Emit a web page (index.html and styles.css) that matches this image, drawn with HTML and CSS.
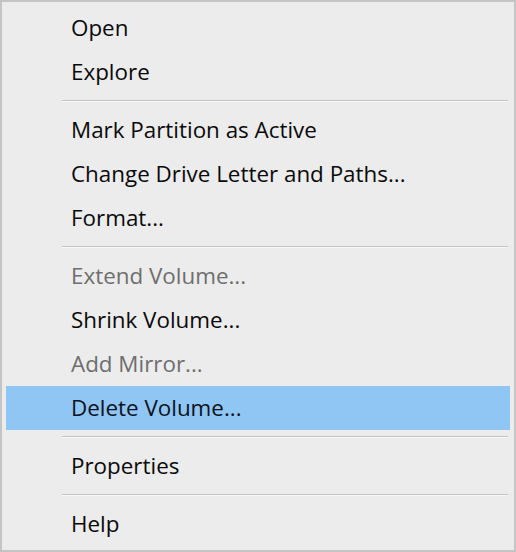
FILE: index.html
```html
<!DOCTYPE html>
<html>
<head>
<meta charset="utf-8">
<link rel="stylesheet" href="styles.css">
</head>
<body>
<div class="menu">
  <div class="item">Open</div>
  <div class="item">Explore</div>
  <div class="sep"></div>
  <div class="item">Mark Partition as Active</div>
  <div class="item">Change Drive Letter and Paths...</div>
  <div class="item">Format...</div>
  <div class="sep"></div>
  <div class="item disabled">Extend Volume...</div>
  <div class="item">Shrink Volume...</div>
  <div class="item disabled">Add Mirror...</div>
  <div class="item active">Delete Volume...</div>
  <div class="sep"></div>
  <div class="item">Properties</div>
  <div class="sep"></div>
  <div class="item">Help</div>
</div>
</body>
</html>
```

FILE: styles.css
```css
html, body {
  margin: 0;
  padding: 0;
  background: #ffffff;
}
.menu {
  box-sizing: border-box;
  width: 516px;
  height: 552px;
  border: 2px solid #c4c4c4;
  background: #ececec;
  padding: 4px 4px 4px 4px;
  font-family: "Open Sans", "Noto Sans", sans-serif;
  font-size: 22.4px;
  color: #0a0a0a;
}
.item {
  height: 44px;
  line-height: 44px;
  padding-left: 65px;
  white-space: nowrap;
  box-sizing: border-box;
}
.item.disabled {
  color: #6e6e6e;
}
.item.active {
  background: #90c6f4;
  color: #0c1220;
}
.sep {
  height: 14px;
  margin-left: 56px;
  margin-right: 2px;
  display: flex;
  flex-direction: column;
}
.sep::before {
  content: "";
  margin-top: 6px;
  height: 1px;
  background: #c4c4c4;
}
.sep::after {
  content: "";
  height: 1px;
  background: #f8f8f8;
}
```
